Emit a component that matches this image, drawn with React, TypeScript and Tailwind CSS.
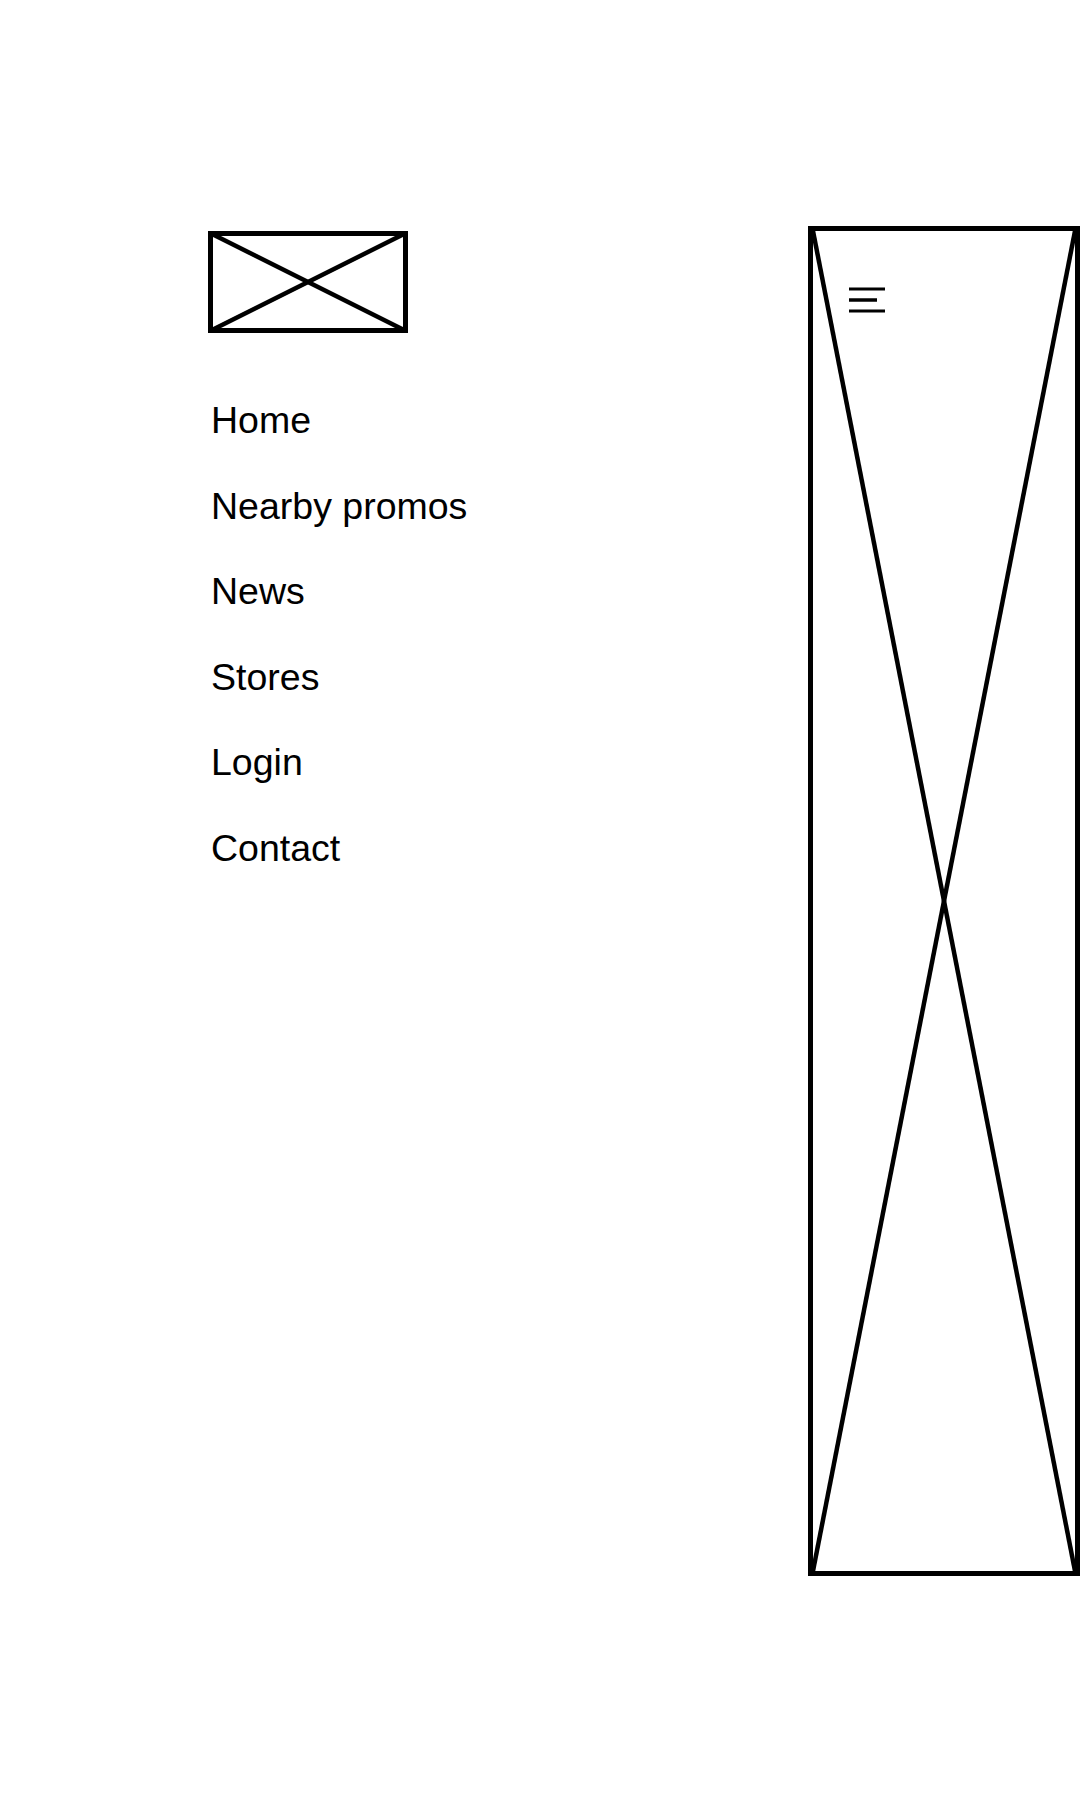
const links = ["Home", "Nearby promos", "News", "Stores", "Login", "Contact"];

function LogoPlaceholder() {
  return (
    <svg width="200" height="102" viewBox="0 0 200 102" className="block">
      <rect x="2.5" y="2.5" width="195" height="97" fill="none" stroke="black" strokeWidth="5" />
      <line x1="2" y1="2" x2="198" y2="100" stroke="black" strokeWidth="4.5" />
      <line x1="2" y1="100" x2="198" y2="2" stroke="black" strokeWidth="4.5" />
    </svg>
  );
}

function MenuIcon() {
  return (
    <svg width="36" height="26" viewBox="0 0 36 26" className="block">
      <line x1="0" y1="2" x2="36" y2="2" stroke="black" strokeWidth="3" />
      <line x1="0" y1="13" x2="28" y2="13" stroke="black" strokeWidth="3.5" />
      <line x1="0" y1="24" x2="36" y2="24" stroke="black" strokeWidth="3" />
    </svg>
  );
}

export default function App() {
  return (
    <div className="w-[1080px] h-[1800px] bg-white flex justify-between font-['Liberation_Sans',Arial,sans-serif] text-black">
      {/* Left nav */}
      <div className="pl-[208px] pt-[231px] flex flex-col">
        <LogoPlaceholder />
        <nav className="mt-[45px] flex flex-col">
          {links.map((label) => (
            <a key={label} href="#" className="text-[37.5px] leading-[85.6px] pl-[3px]">
              {label}
            </a>
          ))}
        </nav>
      </div>

      {/* Right image placeholder */}
      <div className="mt-[226px] w-[272px] h-[1350px] border-[5px] border-black relative">
        <svg
          className="absolute inset-0 w-full h-full"
          viewBox="0 0 262 1340"
          preserveAspectRatio="none"
        >
          <line x1="0" y1="0" x2="262" y2="1340" stroke="black" strokeWidth="4.5" vectorEffect="non-scaling-stroke" />
          <line x1="0" y1="1340" x2="262" y2="0" stroke="black" strokeWidth="4.5" vectorEffect="non-scaling-stroke" />
        </svg>
        <div className="relative pl-[36px] pt-[56px]">
          <MenuIcon />
        </div>
      </div>
    </div>
  );
}
